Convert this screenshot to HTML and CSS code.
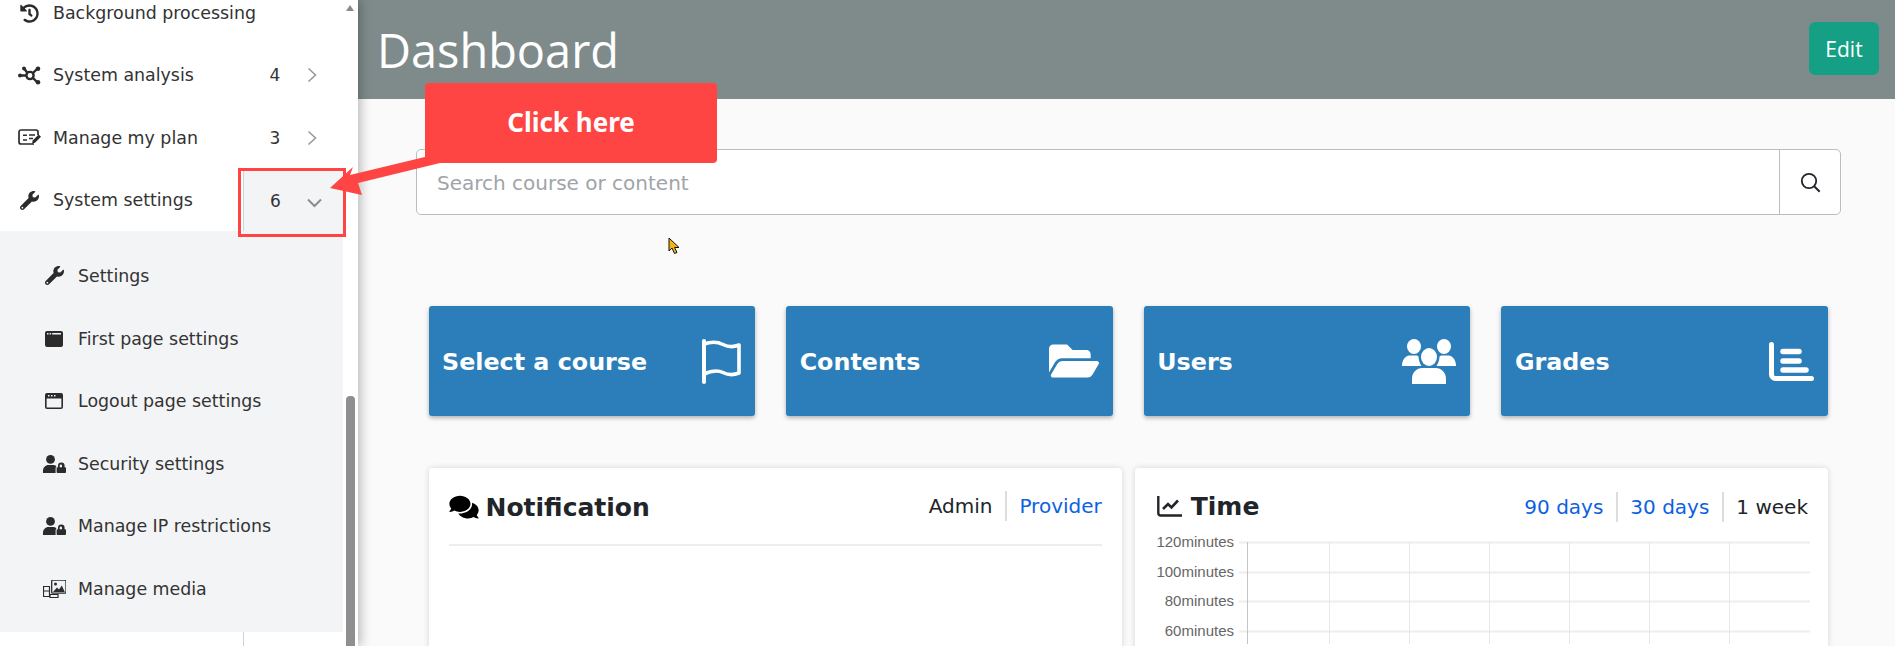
FILE: index.html
```html
<!DOCTYPE html>
<html lang="en">
<head>
<meta charset="utf-8">
<title>Dashboard</title>
<link rel="stylesheet" href="styles.css">
</head>
<body>
<div class="page">
  <aside class="sidebar">
    <nav class="menu">
      <a class="row">
        <span class="ico"><svg width="19" height="19" viewBox="0 0 512 512"><path d="M504 255.531c.253 136.64-111.18 248.372-247.82 248.468-59.015.042-113.223-20.53-155.822-54.911-11.077-8.94-11.905-25.541-1.839-35.607l11.267-11.267c8.609-8.609 22.353-9.551 31.891-1.984C173.062 425.135 212.781 440 256 440c101.705 0 184-82.311 184-184 0-101.705-82.311-184-184-184-48.814 0-93.149 18.969-126.068 49.932l50.754 50.754c10.08 10.08 2.941 27.314-11.313 27.314H24c-8.837 0-16-7.163-16-16V38.627c0-14.254 17.234-21.393 27.314-11.314l49.372 49.372C129.209 34.136 189.552 8 256 8c136.81 0 247.747 110.78 248 247.531zm-180.912 78.784l9.823-12.63c8.138-10.463 6.253-25.542-4.21-33.679L288 256.349V152c0-13.255-10.745-24-24-24h-16c-13.255 0-24 10.745-24 24v135.651l65.409 50.874c10.463 8.137 25.541 6.253 33.679-4.21z"/></svg></span>
        <span class="label">Background processing</span>
      </a>
      <a class="row wide">
        <span class="ico"><svg width="23" height="19" viewBox="0 0 23 19"><g fill="none" stroke="#2b2b2b" stroke-width="2.400"><circle cx="12" cy="9.500" r="3.600"/><path d="M3 9.500h5.500M15 7l4-4M15 12l4 4M9.500 7l-3-4"/></g><circle cx="2" cy="9.500" r="2"/><circle cx="20" cy="2.800" r="2.300"/><circle cx="20" cy="16.200" r="2.300"/><circle cx="6" cy="2.500" r="2"/></svg></span>
        <span class="label">System analysis</span>
        <span class="cell"><span class="count">4</span><svg class="chev" width="10" height="16" viewBox="0 0 10 16"><path d="M1.500 1.500 8.500 8l-7 6.500" fill="none" stroke="#999" stroke-width="1.600"/></svg></span>
      </a>
      <a class="row wide">
        <span class="ico"><svg width="23" height="17" viewBox="0 0 23 17"><path d="M16 15H3a2 2 0 0 1-2-2V3a2 2 0 0 1 2-2h15a2 2 0 0 1 2 2v3" fill="none" stroke="#2b2b2b" stroke-width="1.700"/><path d="M5 6.200h4M5 11h4M11 6h6M11 9.500h4" stroke="#2b2b2b" stroke-width="1.500"/><path d="M14 14.500l.7-3 6-6 2.300 2.300-6 6z"/></svg></span>
        <span class="label">Manage my plan</span>
        <span class="cell"><span class="count">3</span><svg class="chev" width="10" height="16" viewBox="0 0 10 16"><path d="M1.500 1.500 8.500 8l-7 6.500" fill="none" stroke="#999" stroke-width="1.600"/></svg></span>
      </a>
      <a class="row">
        <span class="ico"><svg width="19" height="19" viewBox="0 0 512 512"><path d="M507.73 109.1c-2.24-9.03-13.54-12.09-20.12-5.51l-74.36 74.36-67.88-11.31-11.31-67.88 74.36-74.36c6.62-6.62 3.43-17.9-5.66-20.16-47.38-11.74-99.55.91-136.58 37.93-39.64 39.64-50.55 97.1-34.05 147.2L18.74 402.76c-24.99 24.99-24.99 65.51 0 90.5 24.99 24.99 65.51 24.99 90.5 0l213.21-213.21c50.12 16.71 107.47 5.68 147.37-34.22 37.07-37.07 49.7-89.32 37.91-136.73zM64 472c-13.25 0-24-10.75-24-24 0-13.26 10.75-24 24-24s24 10.74 24 24c0 13.25-10.75 24-24 24z"/></svg></span>
        <span class="label">System settings</span>
        <span class="cell open"><span class="count">6</span><svg class="chev down" width="15" height="10" viewBox="0 0 15 10"><path d="M1 1.500 7.500 8 14 1.500" fill="none" stroke="#8c8c8c" stroke-width="2"/></svg></span>
      </a>
      <div class="submenu">
        <a class="row sub">
          <span class="ico"><svg width="19" height="19" viewBox="0 0 512 512"><path d="M507.73 109.1c-2.24-9.03-13.54-12.09-20.12-5.51l-74.36 74.36-67.88-11.31-11.31-67.88 74.36-74.36c6.62-6.62 3.43-17.9-5.66-20.16-47.38-11.74-99.55.91-136.58 37.93-39.64 39.64-50.55 97.1-34.05 147.2L18.74 402.76c-24.99 24.99-24.99 65.51 0 90.5 24.99 24.99 65.51 24.99 90.5 0l213.21-213.21c50.12 16.71 107.47 5.68 147.37-34.22 37.07-37.07 49.7-89.32 37.91-136.73zM64 472c-13.25 0-24-10.75-24-24 0-13.26 10.75-24 24-24s24 10.74 24 24c0 13.25-10.75 24-24 24z"/></svg></span>
          <span class="label">Settings</span>
        </a>
        <a class="row sub">
          <span class="ico shift"><svg width="18" height="16" viewBox="0 0 18 16"><path d="M2 0h14a2 2 0 0 1 2 2v12a2 2 0 0 1-2 2H2a2 2 0 0 1-2-2V2a2 2 0 0 1 2-2z"/><path d="M2 2h1.500v1.400H2zM4.600 2h1.500v1.400H4.600zM7.200 2h8.800v1.400H7.200z" fill="#f3f4f6"/></svg></span>
          <span class="label">First page settings</span>
        </a>
        <a class="row sub">
          <span class="ico shift"><svg width="18" height="16" viewBox="0 0 18 16"><path d="M2 0h14a2 2 0 0 1 2 2v12a2 2 0 0 1-2 2H2a2 2 0 0 1-2-2V2a2 2 0 0 1 2-2zm-.4 5.400V14c0 .3.2.4.4.4h14c.2 0 .4-.1.4-.4V5.400z"/><path d="M3 2h1.500v1.500H3zM6 2h1.500v1.500H6zM9 2h1.500v1.500H9z" fill="#f3f4f6"/></svg></span>
          <span class="label">Logout page settings</span>
        </a>
        <a class="row sub">
          <span class="ico"><svg width="23" height="18" viewBox="0 0 23 18"><circle cx="7.500" cy="4.400" r="4.400"/><path d="M0 18v-2.500C0 12.500 2.500 10 5.500 10h4c1.800 0 3 .5 4 1.300-.6.6-.9 1.400-.9 2.300V18z"/><path d="M14.500 18a.9.9 0 0 1-.9-.9v-4a.9.9 0 0 1 .9-.9h.5v-1.500a3.300 3.300 0 0 1 6.600 0v1.500h.5a.9.9 0 0 1 .9.900v4a.9.9 0 0 1-.9.900zm2.200-5.800h2.300v-1.500a1.150 1.150 0 0 0-2.300 0z"/></svg></span>
          <span class="label">Security settings</span>
        </a>
        <a class="row sub">
          <span class="ico"><svg width="23" height="18" viewBox="0 0 23 18"><circle cx="7.500" cy="4.400" r="4.400"/><path d="M0 18v-2.500C0 12.500 2.500 10 5.500 10h4c1.800 0 3 .5 4 1.300-.6.6-.9 1.400-.9 2.300V18z"/><path d="M14.500 18a.9.9 0 0 1-.9-.9v-4a.9.9 0 0 1 .9-.9h.5v-1.500a3.300 3.300 0 0 1 6.600 0v1.500h.5a.9.9 0 0 1 .9.900v4a.9.9 0 0 1-.9.900zm2.200-5.800h2.300v-1.500a1.150 1.150 0 0 0-2.300 0z"/></svg></span>
          <span class="label">Manage IP restrictions</span>
        </a>
        <a class="row sub">
          <span class="ico"><svg width="23" height="18" viewBox="0 0 23 18"><path d="M8.700 1.200a1 1 0 0 1 1-1H22a1 1 0 0 1 1 1v11a1 1 0 0 1-1 1H9.700a1 1 0 0 1-1-1z" fill="none" stroke="#2b2b2b" stroke-width="1.300"/><circle cx="12.500" cy="4" r="1.500"/><path d="M10 12l4-4.500 2 2 2.800-4 3 6.500z"/><path d="M.5 6.500h6v10h-6zM7 14.500h8v3H7z" fill="none" stroke="#2b2b2b" stroke-width="1.200"/><path d="M1 11h5" stroke="#2b2b2b"/></svg></span>
          <span class="label">Manage media</span>
        </a>
      </div>
      <a class="row stub"><span class="label"></span><span class="cell line"></span></a>
    </nav>
    <div class="scroll-up"></div>
    <div class="scroll-thumb"></div>
  </aside>

  <main class="main">
    <header class="topbar">
      <h1 class="title">Dashboard</h1>
      <button class="edit">Edit</button>
    </header>

    <div class="search">
      <span class="placeholder">Search course or content</span>
      <span class="search-btn"><svg width="21" height="21" viewBox="0 0 21 21"><circle cx="9" cy="9" r="7.200" fill="none" stroke="#212529" stroke-width="1.800"/><path d="M14.200 14.200l5.500 5.500" stroke="#212529" stroke-width="2"/></svg></span>
    </div>

    <section class="cards">
      <div class="card"><span class="card-name">Select a course</span>
        <svg width="39" height="45" viewBox="0 0 39 45"><path d="M2 2v41" stroke="#fff" stroke-width="4" stroke-linecap="round"/><path d="M2 5c9-3 14-2 19 .5s10 3 16 .5v28c-6 2.500-11 2-16-.5S11 31 2 35" fill="none" stroke="#fff" stroke-width="3.600" stroke-linejoin="round"/></svg>
      </div>
      <div class="card"><span class="card-name">Contents</span>
        <svg width="50" height="44" viewBox="0 0 576 512" preserveAspectRatio="none"><path fill="#fff" d="M572.694 292.093L500.27 416.248A63.997 63.997 0 0 1 444.989 448H45.025c-18.523 0-30.064-20.093-20.731-36.093l72.424-124.155A64 64 0 0 1 152 256h399.964c18.523 0 30.064 20.093 20.73 36.093zM152 224h328v-48c0-26.51-21.49-48-48-48H272l-64-64H48C21.49 64 0 85.49 0 112v278.046l69.077-118.418C86.214 242.25 117.989 224 152 224z"/></svg>
      </div>
      <div class="card"><span class="card-name">Users</span>
        <svg width="54" height="45" viewBox="0 0 54 45" fill="#fff"><ellipse cx="12" cy="7.500" rx="7" ry="7.500"/><ellipse cx="42" cy="7.500" rx="7" ry="7.500"/><ellipse cx="27" cy="18" rx="8" ry="9"/><path d="M0 27c0-6 3-10 7.500-10.500h6c1.500 0 2.500.5 3 1 0 4 1.500 7 3 9.500zM54 27c0-6-3-10-7.500-10.500h-6c-1.500 0-2.500.5-3 1 0 4-1.500 7-3 9.500zM10 45v-5c0-7 5-11 10-11h14c5 0 10 4 10 11v5z"/></svg>
      </div>
      <div class="card"><span class="card-name">Grades</span>
        <svg width="45" height="39" viewBox="0 0 45 39"><path d="M2.500 2.500v30a4 4 0 0 0 4 4h36" fill="none" stroke="#fff" stroke-width="5" stroke-linecap="round"/><path d="M14 10.500h16M14 20h16M14 29h23" fill="none" stroke="#fff" stroke-width="5.500" stroke-linecap="round" transform="translate(0 -1)"/></svg>
      </div>
    </section>

    <section class="panels">
      <article class="panel">
        <div class="panel-head ruled">
          <h2 class="panel-title note"><svg width="30" height="26" viewBox="0 0 576 512"><path d="M416 192c0-88.400-93.100-160-208-160S0 103.600 0 192c0 34.300 14.100 65.900 38 92-13.400 30.200-35.500 54.200-35.800 54.500-2.200 2.300-2.800 5.700-1.500 8.700S4.800 352 8 352c36.600 0 66.900-12.300 88.700-25 32.200 15.700 70.300 25 111.300 25 114.900 0 208-71.600 208-160zm122 220c23.900-26 38-57.700 38-92 0-66.900-53.500-124.200-129.300-148.100.9 6.600 1.300 13.300 1.300 20.100 0 105.900-107.700 192-240 192-10.800 0-21.300-.8-31.700-1.900C207.800 439.600 281.800 480 368 480c41 0 79.100-9.200 111.300-25 21.800 12.700 52.100 25 88.700 25 3.200 0 6.100-1.900 7.300-4.800 1.300-2.900.7-6.300-1.500-8.700-.3-.3-22.400-24.200-35.800-54.500z"/></svg>Notification</h2>
          <div class="tabs"><span>Admin</span><a class="on">Provider</a></div>
        </div>
      </article>
      <article class="panel">
        <div class="panel-head">
          <h2 class="panel-title time"><svg width="25" height="21" viewBox="0 0 25 21"><path d="M1.300 0v17a2.500 2.500 0 0 0 2.500 2.500H25" fill="none" stroke="#212529" stroke-width="2.400"/><path d="M6 13l5-5 3.500 3.500L21 4.500" fill="none" stroke="#212529" stroke-width="2.600"/></svg>Time</h2>
          <div class="tabs"><a class="on">90 days</a><a class="on">30 days</a><span>1 week</span></div>
        </div>
        <svg class="chart" width="693" height="110" viewBox="0 0 693 110">
          <g stroke="#e8e8e8" stroke-width="1">
            <path d="M104 8.500H675M104 38.500H675M104 67.500H675M104 97.500H675" stroke-width="2" stroke="#eeeeee"/>
            <path d="M194.500 8V110M274.500 8V110M354.500 8V110M434.500 8V110M514.500 8V110M594.500 8V110"/>
            <path d="M112.500 8V110" stroke="#c4c4c4"/>
          </g>
          <g class="chart-labels" text-anchor="end">
            <text x="99" y="13">120minutes</text>
            <text x="99" y="42.500">100minutes</text>
            <text x="99" y="72">80minutes</text>
            <text x="99" y="101.500">60minutes</text>
          </g>
        </svg>
      </article>
    </section>
  </main>

  <div class="redbox"></div>
  <svg class="arrow" width="120" height="50" viewBox="0 0 120 50"><path d="M0 38 23 17 20 25 100 5.800 110 13 28 33 32 45z" fill="#ff4444"/></svg>
  <div class="callout">Click here</div>
  <svg class="cursor" width="13" height="18" viewBox="0 0 13 18"><path d="M1 1v13l3-3 2.500 5.500 2.500-1L6.500 10.500H11z" fill="#f6b40e" stroke="#111" stroke-width="1"/></svg>
</div>
</body>
</html>
```
FILE: styles.css
```css
* { box-sizing: border-box; }
html, body { margin: 0; padding: 0; height: 646px; overflow: hidden; }
body { font-family: "DejaVu Sans", sans-serif; color: #212529; background: #fafafa; }
.page { position: relative; display: flex; width: 1895px; height: 646px; overflow: hidden; }

.sidebar { position: relative; flex: 0 0 358px; height: 646px; background: #fff; overflow: hidden; box-shadow: 3px 0 10px rgba(0,0,0,.25); z-index: 2; }
.menu { width: 343px; margin-top: -18px; }
.row { display: flex; align-items: center; height: 62.3px; padding-left: 20px; font-size: 17.4px; color: #333; }
.ico { flex: 0 0 33px; display: flex; align-items: center; }
.ico svg { fill: #2b2b2b; display: block; }
.row.wide .ico { margin-left: -2px; flex-basis: 35px; }
.label { flex: 1; white-space: nowrap; }
.cell { flex: 0 0 100px; align-self: stretch; display: flex; align-items: center; }
.count { flex: 0 0 64px; text-align: center; font-size: 17px; }
.cell.open { background: #f3f4f6; border-left: 1px solid #cfd1d4; margin-top: 2px; }
.cell.open .count { flex-basis: 63px; }
.chev.down { margin-top: 3px; }
.submenu { background: #f3f4f6; padding: 13.5px 0 0; height: 401px; }
.row.sub { height: 62.6px; padding-left: 43px; }
.row.sub .ico { flex-basis: 35px; }
.row.sub .ico.shift { padding-left: 2px; }
.row.sub .ico svg[width="19"] { margin-left: 2px; }
.stub { height: 62px; padding: 0; }
.cell.line { border-left: 1px solid #cfd1d4; }
.scroll-up { position: absolute; left: 346px; top: 5px; width: 0; height: 0; border-left: 4.5px solid transparent; border-right: 4.5px solid transparent; border-bottom: 6px solid #8a8a8a; }
.scroll-thumb { position: absolute; left: 346px; top: 396px; width: 9px; height: 260px; background: #8f8f8f; border-radius: 4px 4px 0 0; }

.main { flex: 1; min-width: 0; }
.topbar { height: 99px; background: #7f8b8b; display: flex; align-items: center; justify-content: space-between; padding: 0 16px 0 19px; }
.title { margin: 2px 0 0; font: 400 46.9px/1.2 "Open Sans", sans-serif; color: #fff; }
.edit { width: 70px; height: 53px; border: 0; border-radius: 6px; background: #15a085; color: #fff; font: 400 21px "Open Sans", sans-serif; margin-top: -2px; }

.search { display: flex; align-items: center; height: 66px; margin: 50px 54px 0 58px; background: #fff; border: 1px solid #bdbdbd; border-radius: 5px; }
.placeholder { flex: 1; padding: 2px 0 0 20px; font-size: 20px; color: #a0a4a8; }
.search-btn { flex: 0 0 61px; align-self: stretch; display: flex; align-items: center; justify-content: center; border-left: 1px solid #bdbdbd; }

.cards { display: grid; grid-template-columns: repeat(4, 1fr); gap: 31px; margin-top: 91px; padding: 0 67px 0 70.5px; }
.card { height: 110px; display: flex; align-items: center; justify-content: space-between; padding: 0 14px 0 13.5px; background: #2b7eb9; border-radius: 3px; box-shadow: 0 2px 4px rgba(0,0,0,.3); color: #fff; font-weight: 700; font-size: 23.8px; }
.card-name { padding-top: 2px; }

.panels { display: grid; grid-template-columns: 1fr 1fr; gap: 13px; margin-top: 52px; padding: 0 67px 0 70.5px; }
.panel { height: 300px; background: #fff; border-radius: 4px; box-shadow: 0 0 6px rgba(0,0,0,.15); }
.panel-head { display: flex; align-items: center; justify-content: space-between; height: 78px; margin: 0 20px; }
.panel-head.ruled { border-bottom: 2px solid #eee; }
.panel-title { display: flex; align-items: center; gap: 7px; margin: 0; font-size: 25px; font-weight: 700; color: #212529; }
.panel-title.note { padding-top: 2px; }
.panel-title.time { margin: -2px 0 0 2px; gap: 9px; }
.tabs { display: flex; align-items: center; font-size: 20px; }
.tabs > * { padding: 4px 12.5px; border-left: 2px solid #ddd; line-height: 22px; }
.tabs > :first-child { border-left: 0; }
.tabs > :last-child { padding-right: 0; }
.on { color: #0d62e0; }
.chart { display: block; margin-top: -12px; }
.chart-labels { font: 15px "Liberation Sans", sans-serif; fill: #666; }

.redbox { position: absolute; left: 238px; top: 168px; width: 108px; height: 69px; border: 3px solid #ff4444; z-index: 3; }
.arrow { position: absolute; left: 330px; top: 150px; z-index: 3; }
.callout { position: absolute; left: 425px; top: 83px; width: 292px; height: 80px; display: flex; align-items: center; justify-content: center; padding-bottom: 3px; background: #ff4444; border-radius: 4px; color: #fff; font: 700 26px "Noto Sans", sans-serif; z-index: 4; }
.cursor { position: absolute; left: 668px; top: 237px; z-index: 4; }
```
